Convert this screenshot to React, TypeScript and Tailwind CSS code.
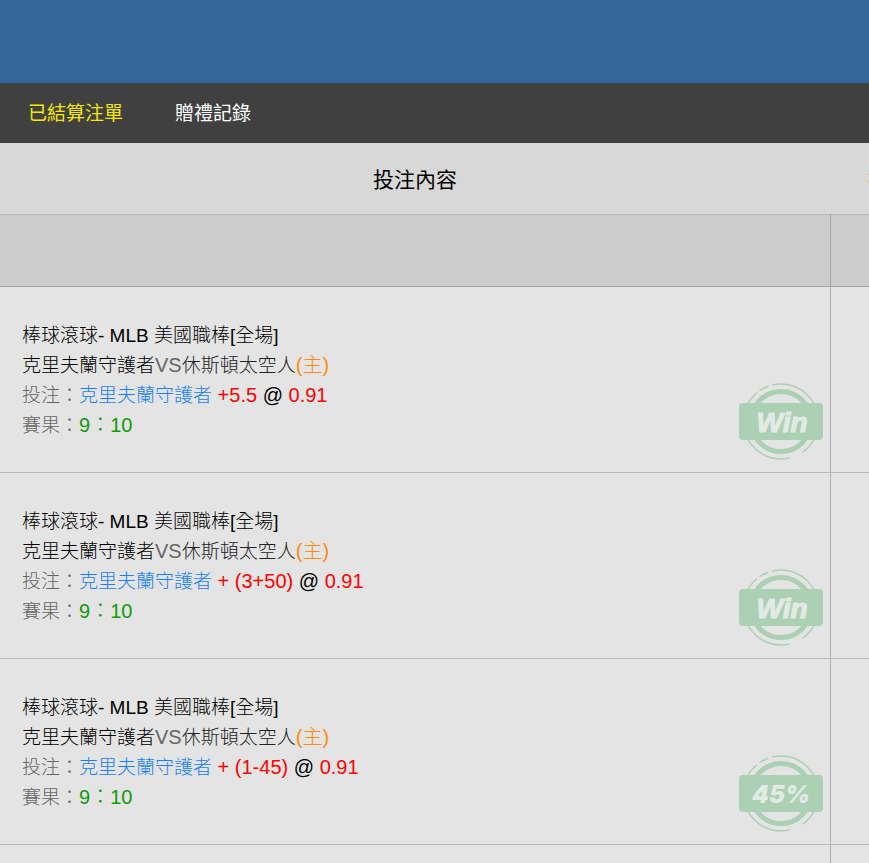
type Bet = {
  id: number;
  league: string;
  home: string;
  away: string;
  pick: string;
  handicap: string;
  odds: string;
  score: string;
  stamp: string;
};

const MATCH = {
  league: "棒球滾球- MLB 美國職棒[全場]",
  home: "克里夫蘭守護者",
  away: "休斯頓太空人",
  pick: "克里夫蘭守護者",
  odds: "0.91",
  score: "9：10",
};

const BETS: Bet[] = [
  { id: 1, ...MATCH, handicap: "+5.5", stamp: "Win" },
  { id: 2, ...MATCH, handicap: "+ (3+50)", stamp: "Win" },
  { id: 3, ...MATCH, handicap: "+ (1-45)", stamp: "45%" },
];

function Stamp({ label }: { label: string }) {
  const isWin = label === "Win";
  return (
    <svg width="84" height="77" viewBox="0 0 84 77" className="shrink-0" role="img" aria-label={label}>
      <circle cx="42" cy="38.5" r="30" fill="none" stroke="#abd0b3" strokeWidth="5" />
      {/* broken outer ring */}
      <circle
        cx="42"
        cy="38.5"
        r="37.5"
        fill="none"
        stroke="#abd0b3"
        strokeWidth="1.4"
        pathLength="360"
        strokeDasharray="55 21 154 5 15 6 104 0"
      />
      <rect x="0" y="20" width="84" height="37" rx="4" fill="#abd0b3" />
      {isWin ? (
        <text
          x="43"
          y="49"
          textAnchor="middle"
          fill="#e2eae4"
          stroke="#e2eae4"
          strokeWidth="1.2"
          className="font-['Liberation_Sans',sans-serif] text-[28px] font-bold italic"
        >
          {label}
        </text>
      ) : (
        <text
          x="42"
          y="48"
          textAnchor="middle"
          fill="#e2eae4"
          className="font-['Inter',sans-serif] text-[24px] font-black italic"
        >
          {label}
        </text>
      )}
    </svg>
  );
}

function BetRow({ bet }: { bet: Bet }) {
  return (
    <tr className="border-b border-[#b9b9b9]">
      <td className="border-r border-[#b0b0b0] p-0">
        <div className="flex items-end justify-between pr-[7px] pb-3 pl-[22px]">
          <div className="pt-[34px] pb-[19px] text-[19px] leading-[30px] font-light text-[#666]">
            <p className="text-black">{bet.league}</p>
            <p>
              <span className="text-black">{bet.home}</span>
              <span className="text-[20px] leading-5">VS</span>
              <span className="text-[#222]">{bet.away}</span>
              <span className="text-[20px] leading-5 text-[#ff8c0a]">(主)</span>
            </p>
            <p>
              投注：<span className="text-[#1a80f5]">{bet.pick}</span>
              <span className="text-[20px] leading-5 text-[#ff0000]">
                {" "}
                {bet.handicap} <span className="text-black">@</span> {bet.odds}
              </span>
            </p>
            <p>
              賽果：<span className="text-[20px] leading-5 text-[#0c9c0c]">{bet.score}</span>
            </p>
          </div>
          <Stamp label={bet.stamp} />
        </div>
      </td>
      <td className="p-0" />
    </tr>
  );
}

export default function App() {
  return (
    <div lang="zh-Hant" className="min-h-screen overflow-hidden bg-[#e4e4e4] font-['Liberation_Sans','Noto_Sans_CJK_TC',sans-serif]">
      <header className="h-[83px] bg-[#336699]" />
      <nav className="flex h-[60px] items-center gap-13 bg-[#404040] px-7 pt-0.5 text-[19px] text-white">
        <a href="#settled" className="text-[#f5e800]">已結算注單</a>
        <a href="#gifts">贈禮記錄</a>
      </nav>
      <table className="w-[calc(100%+121px)] table-fixed border-collapse">
        <colgroup>
          <col />
          <col className="w-[160px]" />
        </colgroup>
        <thead>
          <tr className="h-[71px] border-b border-[#b9b9b9] bg-[#d8d8d8] text-[21px] text-black">
            <th className="p-0 pt-0.5 font-normal">投注內容</th>
            <th className="p-0 pt-0.5 font-normal">投注金額</th>
          </tr>
        </thead>
        <tbody>
          <tr className="h-[72px] border-b border-[#a4a4a4] bg-[#cccccc]">
            <td className="border-r border-[#a4a4a4] p-0" />
            <td className="p-0" />
          </tr>
          {BETS.map((bet) => (
            <BetRow key={bet.id} bet={bet} />
          ))}
          <tr className="h-5">
            <td className="border-r border-[#b0b0b0] p-0" />
            <td className="p-0" />
          </tr>
        </tbody>
      </table>
    </div>
  );
}
